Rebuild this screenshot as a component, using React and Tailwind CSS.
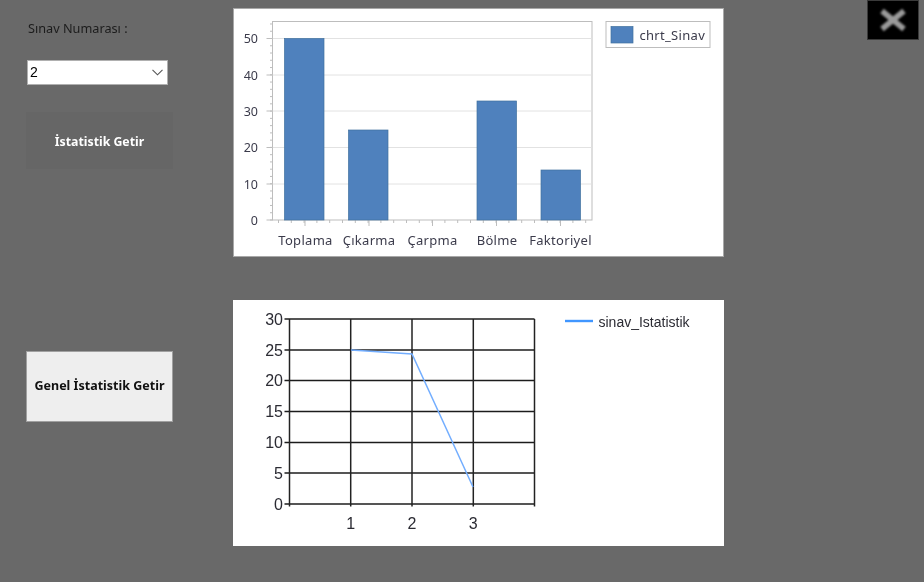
import React from "react";

const ui = { fontFamily: '"Noto Sans", sans-serif' };

function BarChart() {
  const ys = [38.5, 75, 111, 147.5, 184, 220];
  const labels = ["50", "40", "30", "20", "10", "0"];
  const minor = [];
  for (let i = 0; i <= 27; i++) minor.push(220 - i * 7.26);
  const xTicks = [];
  for (let x = 278; x <= 591; x += 12.8) xTicks.push(x);
  const bars = [
    [284, 39.5, 38.5],
    [348, 39.5, 130],
    [476.5, 39.5, 101],
    [540.5, 39.5, 170],
  ];
  const cats = [
    ["Toplama", 305],
    ["Çıkarma", 368.5],
    ["Çarpma", 432],
    ["Bölme", 496.5],
    ["Faktoriyel", 560],
  ];
  return (
    <svg viewBox="234 9 488 247" className="block w-full h-full" style={ui}>
      <rect x="272" y="21.5" width="319.5" height="198.5" fill="#fff" stroke="#bdbdbd" />
      {ys.slice(0, 5).map((y) => (
        <line key={y} x1="272" x2="591" y1={y} y2={y} stroke="#e2e2e2" />
      ))}
      {minor.map((y) => (
        <line key={y} x1="269.5" x2="272" y1={y} y2={y} stroke="#bdbdbd" />
      ))}
      {ys.map((y) => (
        <line key={"m" + y} x1="266" x2="272" y1={y} y2={y} stroke="#bdbdbd" />
      ))}
      {xTicks.map((x) => (
        <line key={x} x1={x} x2={x} y1="220" y2="223" stroke="#bdbdbd" />
      ))}
      {[304.5, 368.5, 432, 496, 560].map((x) => (
        <line key={x} x1={x} x2={x} y1="220" y2="226" stroke="#bdbdbd" />
      ))}
      {bars.map(([x, w, y]) => (
        <rect key={x} x={x} y={y} width={w} height={220 - y} fill="#4f81bd" stroke="#41719f" strokeWidth="0.7" />
      ))}
      {ys.map((y, i) => (
        <text key={labels[i]} x="257.5" y={y + 4.5} textAnchor="end" fontSize="12.5" fill="#3b3b4b">
          {labels[i]}
        </text>
      ))}
      {cats.map(([t, x]) => (
        <text key={t} x={x} y="245" textAnchor="middle" fontSize="13" letterSpacing="0.3" fill="#3b3b4b">
          {t}
        </text>
      ))}
      <rect x="605.5" y="21.5" width="104" height="26" fill="#fff" stroke="#bdbdbd" />
      <rect x="610.5" y="26.5" width="22" height="16.5" fill="#4f81bd" stroke="#41719f" strokeWidth="0.7" />
      <text x="639" y="39.5" fontSize="13" letterSpacing="0.3" fill="#3b3b4b">
        chrt_Sinav
      </text>
    </svg>
  );
}

function LineChart() {
  const hs = [
    [319, "30"],
    [350, "25"],
    [380.5, "20"],
    [411.5, "15"],
    [442.5, "10"],
    [473, "5"],
    [504, "0"],
  ];
  const vs = [
    [289.5, ""],
    [350.7, "1"],
    [412, "2"],
    [473.3, "3"],
    [534.5, ""],
  ];
  const font = { fontFamily: '"Liberation Sans", sans-serif' };
  return (
    <svg viewBox="233 300 491 246" className="block w-full h-full" style={font}>
      {hs.map(([y, t]) => (
        <g key={t}>
          <line x1="284.5" x2="534.5" y1={y} y2={y} stroke="#1c1c1c" strokeWidth="1.5" />
          <text x="283" y={y + 5.5} textAnchor="end" fontSize="16" fill="#2b2b33">
            {t}
          </text>
        </g>
      ))}
      {vs.map(([x, t]) => (
        <g key={x}>
          <line x1={x} x2={x} y1="319" y2="506.5" stroke="#222" strokeWidth="1.5" />
          {t && (
            <text x={x} y="529" textAnchor="middle" fontSize="16" fill="#2b2b33">
              {t}
            </text>
          )}
        </g>
      ))}
      <polyline points="351,350 412,354 473,487" fill="none" stroke="#73aeff" strokeWidth="1.5" />
      <line x1="565" x2="593" y1="321" y2="321" stroke="#4096ff" strokeWidth="2.4" />
      <text x="598.5" y="326.5" fontSize="14" fill="#2b2b33">
        sinav_Istatistik
      </text>
    </svg>
  );
}

export default function App() {
  return (
    <div className="w-[924px] h-[582px] bg-[#696969] flex overflow-hidden blur-[0.35px]" style={ui}>
      <div className="w-[233px] pl-[26px] shrink-0 flex flex-col">
        <div className="mt-[20px] ml-[2px] h-[17px] leading-[17px] text-[12.7px] text-[#1c1c1c]">Sınav Numarası :</div>
        <div className="mt-[23px] ml-[1px] w-[141px] h-[25px] bg-white border border-[#b0b0b0] flex items-center justify-between pl-[2px] pr-[4px]">
          <span className="text-[14px] text-black" style={{ fontFamily: '"Liberation Sans", sans-serif' }}>2</span>
          <svg width="11" height="7" viewBox="0 0 11 7" fill="none">
            <path d="M0.5 0.8 L5.5 5.8 L10.5 0.8" stroke="#555" strokeWidth="1.1" />
          </svg>
        </div>
        <div className="mt-[27px] w-[147px] h-[57px] pt-[3px] bg-[#666666] flex items-center justify-center text-[12.3px] font-bold text-white">
          İstatistik Getir
        </div>
        <div className="mt-[182px] w-[147px] h-[71px] bg-[#eeeeee] border border-[#a0a0a0] flex items-center justify-center text-[12.5px] font-bold text-[#111]">
          Genel İstatistik Getir
        </div>
      </div>
      <div className="w-[491px] shrink-0 pt-[8px] flex flex-col gap-[43px]">
        <div className="h-[249px] bg-white border border-[#a8a8a8]">
          <BarChart />
        </div>
        <div className="h-[246px] bg-white">
          <LineChart />
        </div>
      </div>
      <div className="ml-[143px] w-[52px] h-[40px] bg-black border border-[#3a3a3a] flex items-center justify-center">
        <svg width="30" height="24" viewBox="0 0 30 24" className="blur-[0.8px]">
          <path d="M4 3 L26 21 M26 3 L4 21" stroke="#9a9a9a" strokeWidth="5.5" />
        </svg>
      </div>
    </div>
  );
}
